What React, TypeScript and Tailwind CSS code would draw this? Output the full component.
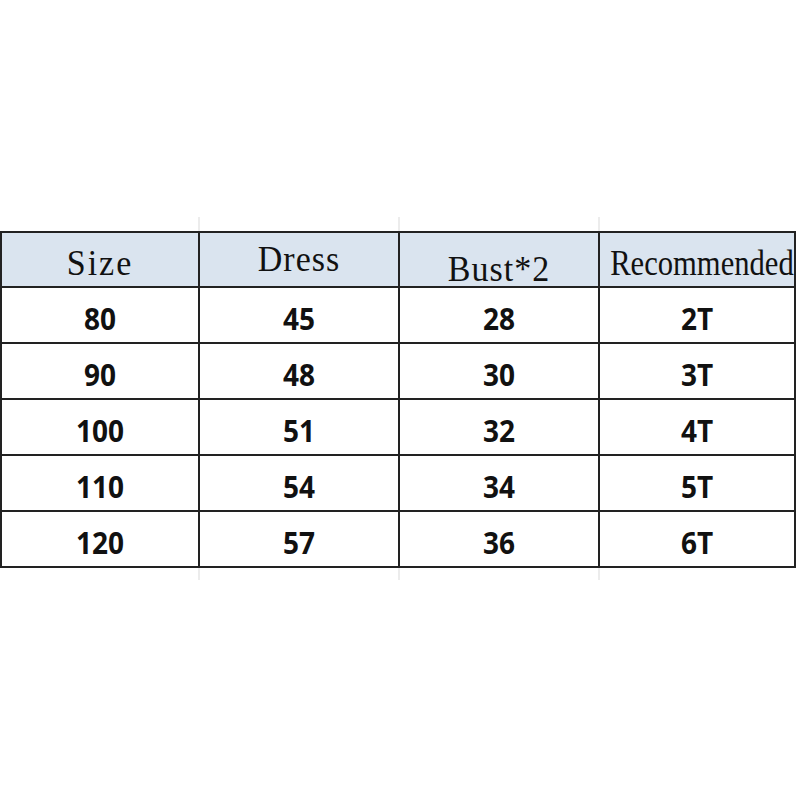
const headers = [
    { label: "Size", cls: "pt-[15px] tracking-[2px] scale-y-[1.08]" },
    { label: "Dress", cls: "pt-[11px] tracking-[1px] scale-y-[1.08]" },
    { label: "Bust*2", cls: "pt-[20px] tracking-[1px] scale-y-[1.08]" },
    { label: "Recommended", cls: "pt-[15px] scale-x-[0.9] scale-y-[1.08]" },
]

const rows = [
    ["80", "45", "28", "2T"],
    ["90", "48", "30", "3T"],
    ["100", "51", "32", "4T"],
    ["110", "54", "34", "5T"],
    ["120", "57", "36", "6T"],
]

const cols = "grid grid-cols-[198px_200px_200px_196px]"

export default function App() {
    return (
        <div className="w-[800px] h-[800px] bg-white pt-[217px]">
            {/* faint sheet gridlines above the table */}
            <div className={`${cols} h-[14px] pl-[2px]`}>
                <div className="border-r-2 border-[#ececec]" />
                <div className="border-r-2 border-[#ececec]" />
                <div className="border-r-2 border-[#ececec]" />
                <div />
            </div>

            <div className="w-[796px] border-t-2 border-l-2 border-[#222]">
                <div className={`${cols} bg-[#dae4ef]`}>
                    {headers.map((h) => (
                        <div
                            key={h.label}
                            className="h-[55px] border-r-2 border-b-2 border-[#222] text-center text-[34px] leading-[30px] text-[#111] font-['Liberation_Serif',serif]"
                        >
                            <span className={`inline-block whitespace-nowrap ${h.cls}`}>{h.label}</span>
                        </div>
                    ))}
                </div>

                {rows.map((row) => (
                    <div key={row[0]} className={cols}>
                        {row.map((cell, i) => (
                            <div
                                key={i}
                                className="h-[56px] border-r-2 border-b-2 border-[#222] flex items-center justify-center pt-[5px] text-[28px] font-bold text-[#111] font-['Open_Sans',sans-serif]"
                            >
                                <span className="inline-block scale-y-110">{cell}</span>
                            </div>
                        ))}
                    </div>
                ))}
            </div>

            {/* faint sheet gridlines below the table */}
            <div className={`${cols} h-[12px] pl-[2px]`}>
                <div className="border-r-2 border-[#ececec]" />
                <div className="border-r-2 border-[#ececec]" />
                <div className="border-r-2 border-[#ececec]" />
                <div />
            </div>
        </div>
    )
}
